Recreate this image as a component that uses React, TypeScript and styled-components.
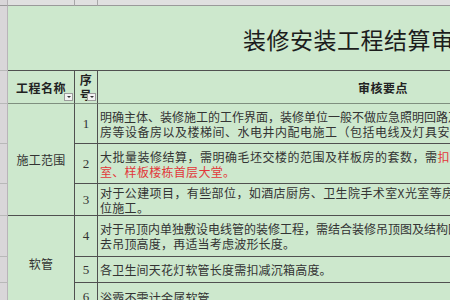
import React from "react";
import styled, { createGlobalStyle } from "styled-components";

const Global = createGlobalStyle`
  html, body { margin: 0; padding: 0; overflow: hidden; background: #cde8cd; }
  body { font-family: "Noto Sans CJK SC", "Noto Sans", sans-serif; color: #333; }
`;

const GRID_DARK = "#505050";

const Sheet = styled.div`
  display: grid;
  grid-template-columns: 8px 67px 23px 570px;
  grid-template-rows: 6px 65px 33px 40px 40px 32px 41px 26px 29px;
  width: 668px;
  background: #cde8cd;
`;

type Place = { $row: string; $col: string };

const placed = (p: Place) => `grid-row: ${p.$row}; grid-column: ${p.$col};`;

const Corner = styled.div<Place>`
  ${placed};
  box-sizing: border-box;
  background: #d9d6d9;
  border-right: 1px solid #b5b0b5;
  border-bottom: 1px solid #9a9a9a;
`;

const ColHeader = styled.div<Place>`
  ${placed};
  box-sizing: border-box;
  background: #e0e0e0;
  border-right: 1px solid #a8a8a8;
  border-bottom: 1px solid #9a9a9a;
`;

const RowHeader = styled.div<Place>`
  ${placed};
  box-sizing: border-box;
  background: #d9d6d9;
  border-right: 1px solid #b9b4b9;
  border-bottom: 1px solid #b8b8b8;
`;

const TitleCell = styled.div<Place>`
  ${placed};
  box-sizing: border-box;
  border-bottom: 1px solid ${GRID_DARK};
  display: flex;
  align-items: center;
  padding: 2px 0 0 235px;
  font-size: 23px;
  font-weight: 400;
  letter-spacing: 0.5px;
  color: #1c1c1c;
  white-space: nowrap;
  overflow: hidden;
`;

const HeadCell = styled.div<Place & { $noRight?: boolean }>`
  ${placed};
  position: relative;
  box-sizing: border-box;
  border-right: ${(p) => (p.$noRight ? "none" : `1px solid ${GRID_DARK}`)};
  border-bottom: 1px solid #7f8f7f;
  display: flex;
  align-items: center;
  justify-content: center;
  text-align: center;
  font-size: 12px;
  font-weight: 700;
  letter-spacing: 0.5px;
  line-height: 15px;
  color: #222;
`;

const FilterBtn = styled.span`
  position: absolute;
  right: 1px;
  bottom: 2px;
  width: 9px;
  height: 8px;
  box-sizing: border-box;
  border: 1px solid #9c9c9c;
  background: #f3f3f3;
  &::after {
    content: "";
    position: absolute;
    left: 1.5px;
    top: 2px;
    border-left: 2.5px solid transparent;
    border-right: 2.5px solid transparent;
    border-top: 2.5px solid #333;
  }
`;

const NameCell = styled.div<Place>`
  ${placed};
  box-sizing: border-box;
  border-right: 1px solid ${GRID_DARK};
  border-bottom: 1px solid ${GRID_DARK};
  display: flex;
  align-items: center;
  justify-content: center;
  font-size: 12px;
  letter-spacing: 0.3px;
  color: #333;
`;

const SeqCell = styled.div<Place>`
  ${placed};
  box-sizing: border-box;
  border-right: 1px solid ${GRID_DARK};
  border-bottom: 1px solid ${GRID_DARK};
  display: flex;
  align-items: center;
  justify-content: center;
  font-family: "Liberation Serif", "Times New Roman", serif;
  font-size: 13px;
  color: #333;
`;

const ContentCell = styled.div<Place>`
  ${placed};
  box-sizing: border-box;
  border-bottom: 1px solid ${GRID_DARK};
  display: flex;
  flex-direction: column;
  justify-content: center;
  padding-left: 2px;
  overflow: hidden;
`;

const Line = styled.div<{ $spread: number }>`
  white-space: nowrap;
  font-size: 12px;
  line-height: 15px;
  letter-spacing: ${(p) => p.$spread}px;
  color: #333;
`;

const Red = styled.span`
  color: #e2373a;
`;

type Seg = { t: string; red?: boolean };
type Row = { no: string; lines: { segs: Seg[]; spread: number }[] };

const rows: Row[] = [
  {
    no: "1",
    lines: [
      { segs: [{ t: "明确主体、装修施工的工作界面，装修单位一般不做应急照明回路及消防设备，机" }], spread: 0 },
      { segs: [{ t: "房等设备房以及楼梯间、水电井内配电施工（包括电线及灯具安装）。" }], spread: 0.5 },
    ],
  },
  {
    no: "2",
    lines: [
      {
        segs: [
          { t: "大批量装修结算，需明确毛坯交楼的范围及样板房的套数，需" },
          { t: "扣除售楼部、样板房、会所及物业管理用", red: true },
        ],
        spread: 0.5,
      },
      { segs: [{ t: "室、样板楼栋首层大堂。", red: true }], spread: 0.3 },
    ],
  },
  {
    no: "3",
    lines: [
      { segs: [{ t: "对于公建项目，有些部位，如酒店厨房、卫生院手术室X光室等房间由专业单" }], spread: 0.4 },
      { segs: [{ t: "位施工。" }], spread: 0.3 },
    ],
  },
  {
    no: "4",
    lines: [
      { segs: [{ t: "对于吊顶内单独敷设电线管的装修工程，需结合装修吊顶图及结构图计算，扣" }], spread: 0 },
      { segs: [{ t: "去吊顶高度，再适当考虑波形长度。" }], spread: 0.2 },
    ],
  },
  {
    no: "5",
    lines: [{ segs: [{ t: "各卫生间天花灯软管长度需扣减沉箱高度。" }], spread: 0.2 }],
  },
  {
    no: "6",
    lines: [{ segs: [{ t: "浴霸不需计金属软管。" }], spread: 0.2 }],
  },
];

export default function App() {
  return (
    <>
      <Global />
      <Sheet>
        <Corner $row="1" $col="1" />
        <ColHeader $row="1" $col="2" />
        <ColHeader $row="1" $col="3" />
        <ColHeader $row="1" $col="4" />

        {Array.from({ length: 8 }, (_, i) => (
          <RowHeader key={i} $row={String(i + 2)} $col="1" />
        ))}

        <TitleCell $row="2" $col="2 / 5">装修安装工程结算审核要点</TitleCell>

        <HeadCell $row="3" $col="2">
          工程名称
          <FilterBtn />
        </HeadCell>
        <HeadCell $row="3" $col="3">
          序<br />号
          <FilterBtn />
        </HeadCell>
        <HeadCell $row="3" $col="4" $noRight>
          审核要点
        </HeadCell>

        <NameCell $row="4 / 7" $col="2">施工范围</NameCell>
        <NameCell $row="7 / 10" $col="2">软管</NameCell>

        {rows.map((r, i) => (
          <React.Fragment key={r.no}>
            <SeqCell $row={String(i + 4)} $col="3">{r.no}</SeqCell>
            <ContentCell $row={String(i + 4)} $col="4">
              {r.lines.map((l, j) => (
                <Line key={j} $spread={l.spread}>
                  {l.segs.map((s, k) => (s.red ? <Red key={k}>{s.t}</Red> : <span key={k}>{s.t}</span>))}
                </Line>
              ))}
            </ContentCell>
          </React.Fragment>
        ))}
      </Sheet>
    </>
  );
}
